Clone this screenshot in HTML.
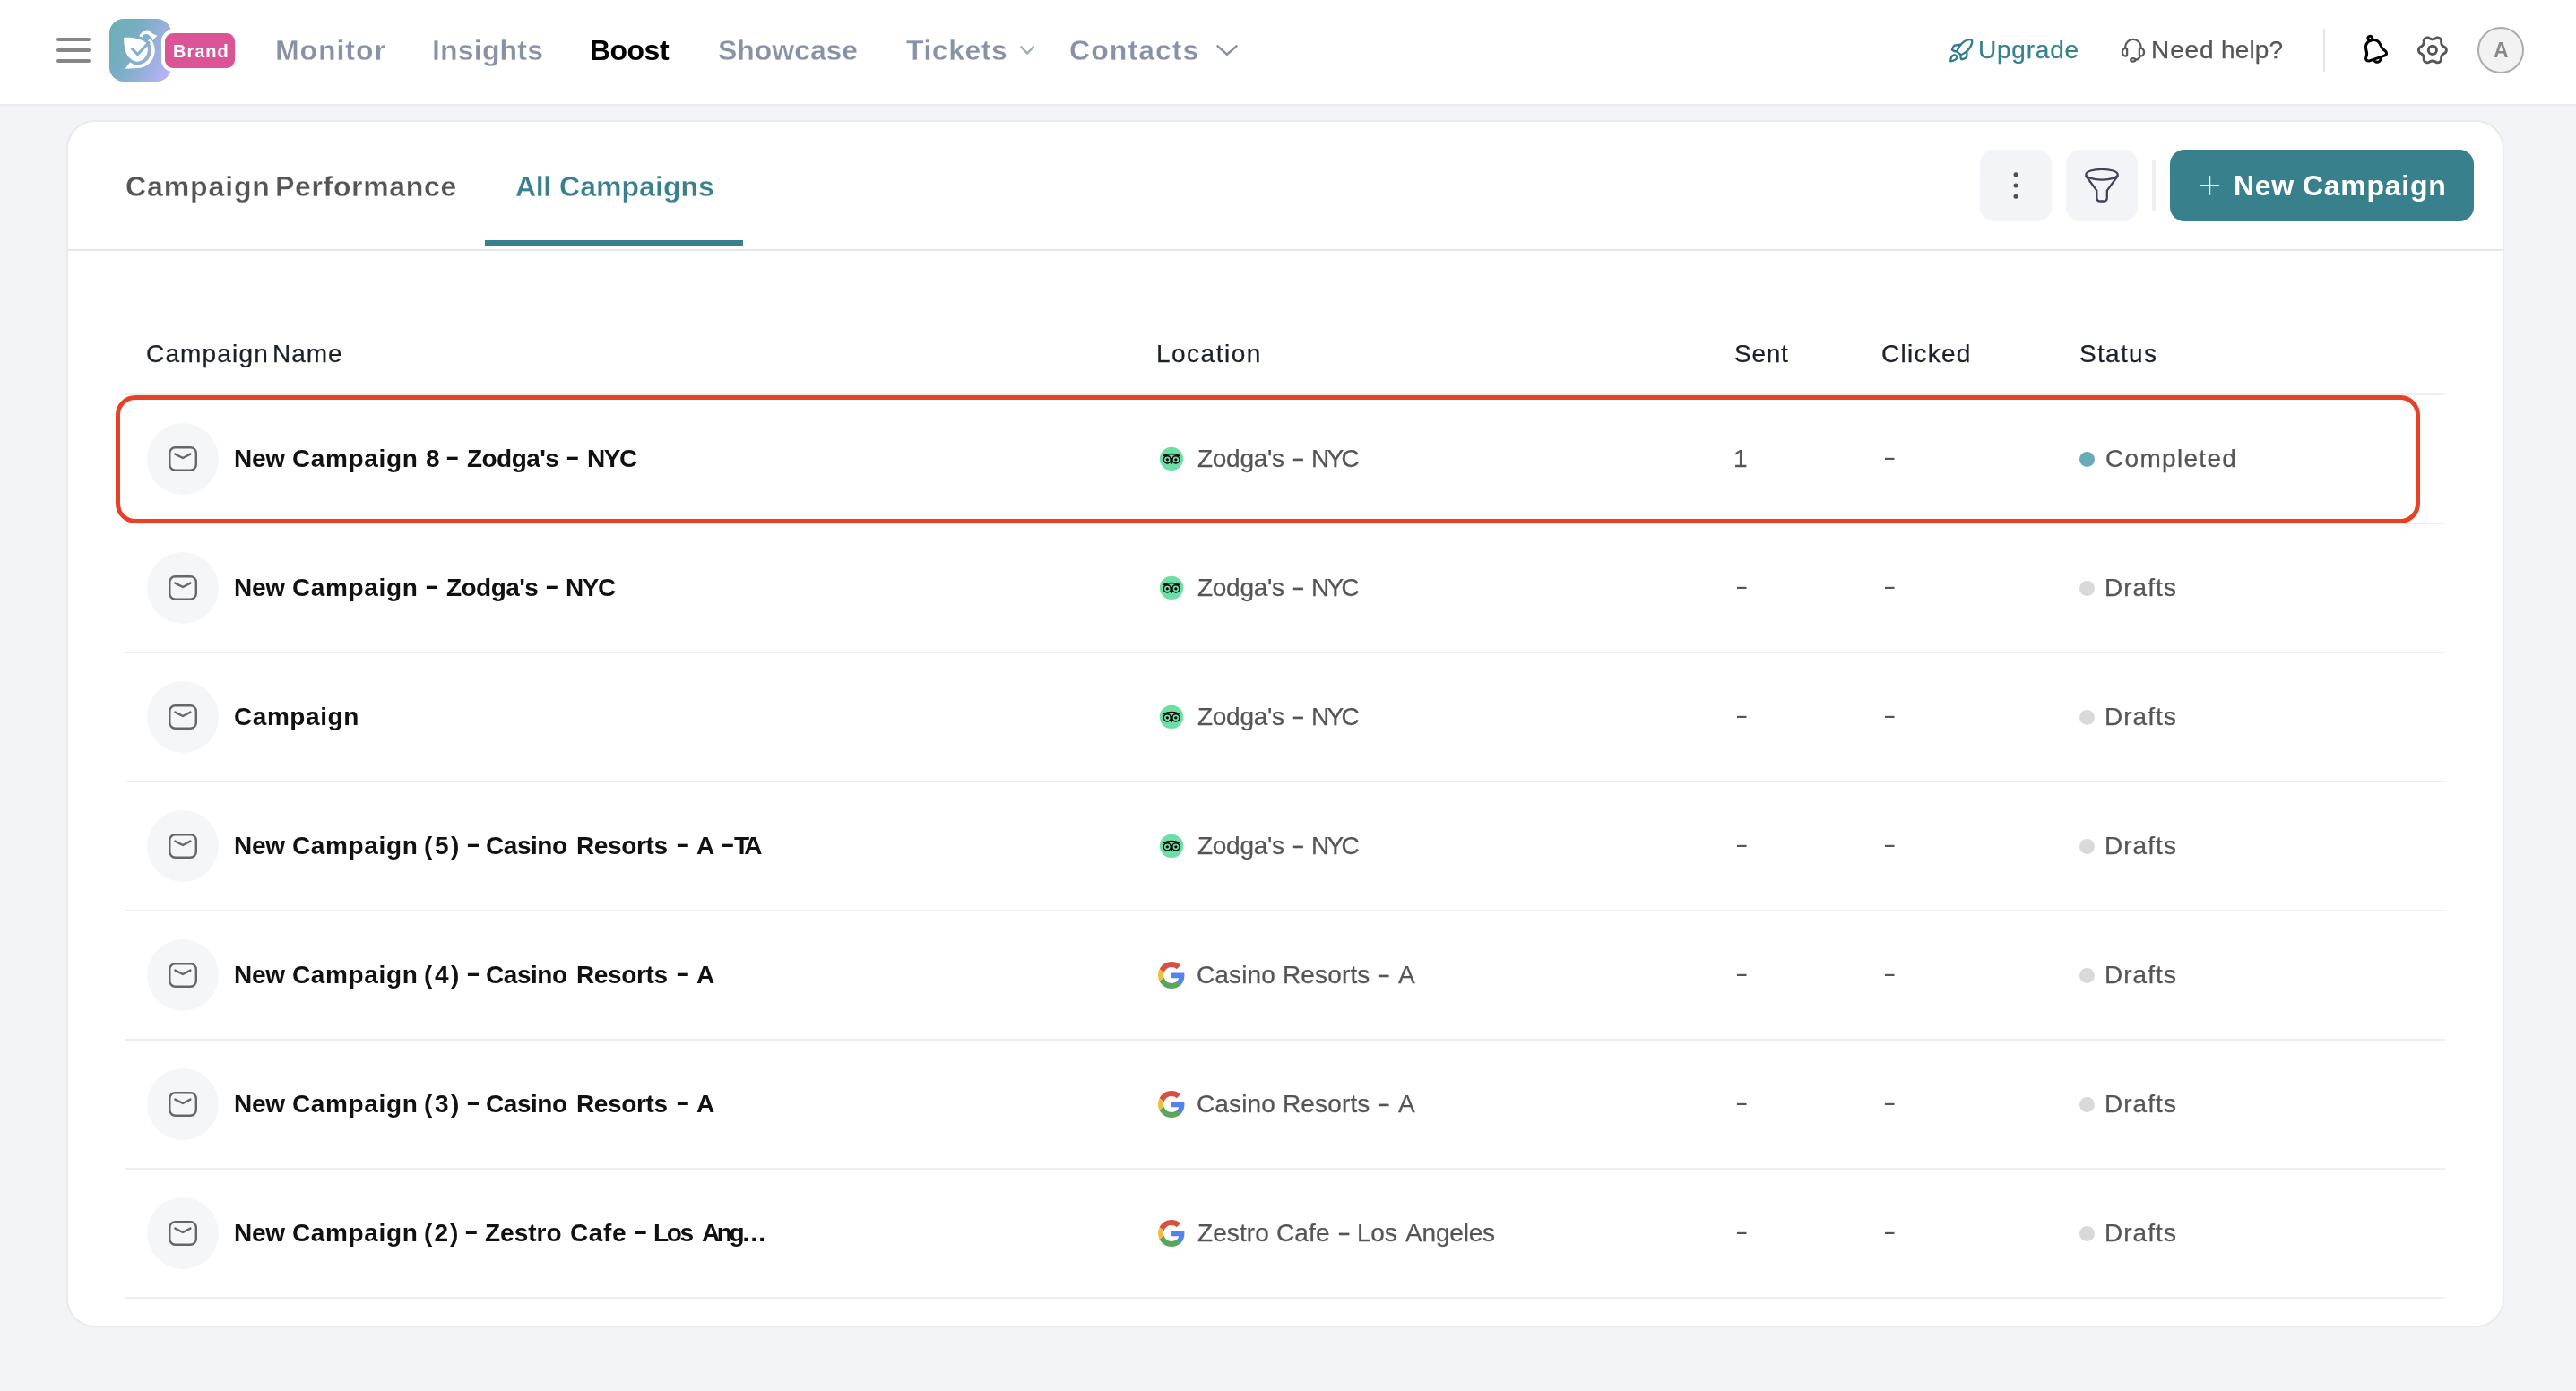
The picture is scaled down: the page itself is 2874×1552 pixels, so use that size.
<!DOCTYPE html>
<html lang="en">
<head>
<meta charset="utf-8">
<title>All Campaigns</title>
<style>
html,body{margin:0;padding:0}
body{width:2874px;height:1552px;overflow:hidden;background:#F3F4F8;position:relative;font-family:"Liberation Sans",sans-serif}
.abs{position:absolute}
.t{will-change:transform;position:absolute;white-space:pre;line-height:1;font-family:"Liberation Sans",sans-serif}
#hdr{left:0;top:0;width:2874px;height:116px;background:#fff;border-bottom:2px solid #EBEBEB}
.bar{left:63px;width:38px;height:4px;border-radius:2px;background:#868686}
#logo{left:122px;top:21px;width:69px;height:70px;border-radius:16px;background:linear-gradient(115deg,#6CAFB5 0%,#76ADC0 32%,#84AFCD 50%,#9BB0DF 68%,#B9B2F7 92%)}
#badge{left:184px;top:36.5px;width:78px;height:39px;border-radius:9px;background:#DB5596;box-shadow:0 0 0 4px #fff}
#vdiv{left:2592px;top:32px;width:2px;height:48px;background:#E3E5EE}
#avatar{left:2764px;top:30px;width:52px;height:52px;border-radius:50%;box-sizing:border-box;border:2px solid #ACACAC;background:#F2F2F2}
#card{left:74px;top:134px;width:2720px;height:1347px;box-sizing:border-box;border:2px solid #EAEAEA;border-radius:32px;background:#fff}
#tabline{left:76px;top:278px;width:2716px;height:2px;background:#E6E6E6}
#tabul{left:541px;top:268px;width:288px;height:6px;background:#37808C}
.sqbtn{top:167px;width:80px;height:80px;border-radius:16px;background:#F3F4F7}
#bdiv{left:2401px;top:179px;width:4px;height:56px;background:#EEEEEE}
#newbtn{left:2421px;top:167px;width:339px;height:80px;border-radius:16px;background:#37808C}
.hr{left:140px;width:2588px;height:2px;background:#EFEFEF}
.circ{left:164px;width:80px;height:80px;border-radius:50%;background:#F5F6F8}
.dot{left:2319.5px;width:17px;height:17px;border-radius:50%;background:#D9D9D9}
#redbox{left:129px;top:441px;width:2571px;height:143px;box-sizing:border-box;border:5px solid #E84025;border-radius:22px}
.dash{position:absolute;white-space:pre;line-height:1;font-size:28px;color:#555;transform:scaleX(1.55);transform-origin:0 50%;will-change:transform}
.hy{transform-origin:0 50%}
.r{-webkit-text-stroke:0.25px currentColor}
.sb{-webkit-text-stroke:0.3px #fff}
svg{position:absolute;overflow:visible}
</style>
</head>
<body>
<div id="hdr" class="abs"></div>
<div class="abs bar" style="top:42px"></div>
<div class="abs bar" style="top:54px"></div>
<div class="abs bar" style="top:66px"></div>
<div id="logo" class="abs"></div>
<svg style="left:118px;top:18px" width="80" height="76" viewBox="0 0 1464 1391">
<path fill="#fff" d="M370,440 C500,425 700,455 815,535 C875,620 880,760 790,860 C730,920 660,935 610,925 C500,890 420,800 395,680 C375,590 365,500 370,440 Z"/>
<path fill="none" stroke="#fff" stroke-width="70" d="M883,481 A327,327 0 0 1 476.5,983.2"/>
<path fill="#fff" d="M395,1075 L500,940 L660,1060 Z"/>
<path fill="none" stroke="#fff" stroke-width="60" d="M712,418 A125,125 0 0 1 940,400"/>
<path fill="#fff" d="M685,400 L740,350 L745,430 Z"/>
<path fill="#fff" d="M915,345 L1050,400 L955,500 Z"/>
<path fill="none" stroke="#82AECB" stroke-width="56" d="M525,655 L650,780 L895,525"/>
</svg>
<div id="badge" class="abs"></div>
<svg style="left:0;top:0" width="2874" height="120"><path d="M1139.3,52.3 L1146.1,59.6 L1152.9,52.3" fill="none" stroke="#A3ABBB" stroke-width="2.4" stroke-linecap="round" stroke-linejoin="round"/></svg>
<svg style="left:0;top:0" width="2874" height="120"><path d="M1358.5,51.4 L1369.0,60.8 L1379.5,51.4" fill="none" stroke="#8892A6" stroke-width="2.6" stroke-linecap="round" stroke-linejoin="round"/></svg>
<svg style="left:2165px;top:35px" width="50" height="45" viewBox="0 0 1546 1391">
<g fill="none" stroke="#2F7D8A" stroke-width="72" stroke-linecap="round" stroke-linejoin="round">
<path d="M560,690 C620,560 720,420 800,360 C880,300 980,270 1050,285 C1090,300 1095,340 1085,400 C1060,500 1010,590 900,690 C840,740 770,780 700,810 Z"/>
<path d="M690,455 C610,470 540,470 480,480 C440,520 410,580 400,630 C420,670 470,680 540,690"/>
<path d="M900,700 C915,760 915,820 905,870 C880,920 800,960 720,965 C690,930 690,880 695,820"/>
<path d="M350,1010 C350,930 390,840 460,815 C520,810 565,850 570,900 C540,980 440,1020 350,1030 Z"/>
</g></svg>
<svg style="left:2355px;top:35px" width="50" height="45" viewBox="0 0 1546 1391">
<g fill="none" stroke="#5A5A5A" stroke-width="70" stroke-linecap="round" stroke-linejoin="round">
<path d="M500,545 A270,270 0 0 1 1040,545"/>
<path d="M560,615 Q560,580 528,580 L505,580 Q400,592 400,715 Q400,838 505,850 L528,850 Q560,850 560,815 Z"/>
<path d="M985,615 Q985,580 1017,580 L1040,580 Q1145,592 1145,715 Q1145,838 1040,850 L1017,850 Q985,850 985,815 Z"/>
<path d="M1005,860 C990,940 930,975 850,980"/>
<ellipse cx="765" cy="985" rx="82" ry="55"/>
</g></svg>
<svg style="left:2625px;top:30px" width="50" height="50" viewBox="-25 -25 50 50">
<g transform="translate(-1.3,0.4) rotate(-19) scale(1.06)" fill="none" stroke="#000" stroke-width="2.8" stroke-linecap="round" stroke-linejoin="round">
<path d="M-8.3,9.6 C-11.2,9.6 -12.2,6.4 -10.4,4.6 C-8.6,2.8 -8,0.2 -8,-2.4 C-8,-7.2 -4.6,-10.4 0,-10.4 C4.6,-10.4 8,-7.2 8,-2.4 C8,0.2 8.6,2.8 10.4,4.6 C12.2,6.4 11.2,9.6 8.3,9.6 Z"/>
<circle cx="0" cy="-12.6" r="2.3"/>
<path d="M-3.6,9.8 C-3.6,12 -2,13.6 0,13.6 C2,13.6 3.6,12 3.6,9.8"/>
</g></svg>
<svg style="left:2688px;top:30px" width="52" height="52" viewBox="-25.9 -25.9 52 52">
<g fill="none" stroke="#555" stroke-width="2.9" stroke-linejoin="round"><path d="M15.45,0.00 L15.42,0.54 L15.31,1.07 L15.15,1.59 L14.91,2.10 L14.60,2.57 L14.20,3.02 L13.66,3.41 L12.91,3.70 L12.46,4.05 L12.03,4.38 L11.62,4.69 L11.24,5.01 L10.91,5.32 L10.63,5.65 L10.39,6.00 L10.21,6.38 L10.06,6.79 L9.96,7.23 L9.87,7.71 L9.81,8.23 L9.74,8.77 L9.66,9.33 L9.78,10.13 L9.71,10.79 L9.53,11.35 L9.27,11.86 L8.95,12.32 L8.58,12.73 L8.17,13.08 L7.73,13.38 L7.24,13.62 L6.73,13.80 L6.19,13.91 L5.64,13.96 L5.07,13.93 L4.49,13.80 L3.88,13.53 L3.25,13.03 L2.72,12.82 L2.22,12.61 L1.74,12.41 L1.29,12.24 L0.85,12.11 L0.42,12.03 L0.00,12.00 L-0.42,12.03 L-0.85,12.11 L-1.29,12.24 L-1.74,12.41 L-2.22,12.61 L-2.72,12.82 L-3.25,13.03 L-3.88,13.53 L-4.49,13.80 L-5.07,13.93 L-5.64,13.96 L-6.19,13.91 L-6.73,13.80 L-7.24,13.62 L-7.72,13.38 L-8.17,13.08 L-8.58,12.73 L-8.95,12.32 L-9.27,11.86 L-9.53,11.35 L-9.71,10.79 L-9.78,10.13 L-9.66,9.33 L-9.74,8.77 L-9.81,8.23 L-9.87,7.71 L-9.96,7.23 L-10.06,6.79 L-10.21,6.38 L-10.39,6.00 L-10.63,5.65 L-10.91,5.32 L-11.24,5.01 L-11.62,4.69 L-12.03,4.38 L-12.46,4.05 L-12.91,3.70 L-13.66,3.41 L-14.20,3.02 L-14.60,2.57 L-14.91,2.10 L-15.15,1.59 L-15.31,1.07 L-15.42,0.54 L-15.45,0.00 L-15.42,-0.54 L-15.31,-1.07 L-15.15,-1.59 L-14.91,-2.10 L-14.60,-2.57 L-14.20,-3.02 L-13.66,-3.41 L-12.91,-3.70 L-12.46,-4.05 L-12.03,-4.38 L-11.62,-4.69 L-11.24,-5.01 L-10.91,-5.32 L-10.63,-5.65 L-10.39,-6.00 L-10.21,-6.38 L-10.06,-6.79 L-9.96,-7.23 L-9.87,-7.71 L-9.81,-8.23 L-9.74,-8.77 L-9.66,-9.33 L-9.78,-10.13 L-9.71,-10.79 L-9.53,-11.35 L-9.27,-11.86 L-8.95,-12.32 L-8.58,-12.73 L-8.17,-13.08 L-7.73,-13.38 L-7.24,-13.62 L-6.73,-13.80 L-6.19,-13.91 L-5.64,-13.96 L-5.07,-13.93 L-4.49,-13.80 L-3.88,-13.53 L-3.25,-13.03 L-2.72,-12.82 L-2.22,-12.61 L-1.74,-12.41 L-1.29,-12.24 L-0.85,-12.11 L-0.42,-12.03 L-0.00,-12.00 L0.42,-12.03 L0.85,-12.11 L1.29,-12.24 L1.74,-12.41 L2.22,-12.61 L2.72,-12.82 L3.25,-13.03 L3.88,-13.53 L4.49,-13.80 L5.07,-13.93 L5.64,-13.96 L6.19,-13.91 L6.73,-13.80 L7.24,-13.62 L7.73,-13.38 L8.17,-13.08 L8.58,-12.73 L8.95,-12.32 L9.27,-11.86 L9.53,-11.35 L9.71,-10.79 L9.78,-10.13 L9.66,-9.33 L9.74,-8.77 L9.81,-8.23 L9.87,-7.71 L9.96,-7.23 L10.06,-6.79 L10.21,-6.38 L10.39,-6.00 L10.63,-5.65 L10.91,-5.32 L11.24,-5.01 L11.62,-4.69 L12.03,-4.38 L12.46,-4.05 L12.91,-3.70 L13.66,-3.41 L14.20,-3.02 L14.60,-2.57 L14.91,-2.10 L15.15,-1.59 L15.31,-1.07 L15.42,-0.54 Z"/><circle cx="0" cy="0" r="4.6"/></g></svg>
<div id="vdiv" class="abs"></div>
<div id="avatar" class="abs"></div>
<div id="card" class="abs"></div>
<div id="tabline" class="abs"></div>
<div id="tabul" class="abs"></div>
<div class="abs sqbtn" style="left:2209px"></div>
<div class="abs sqbtn" style="left:2305px"></div>
<div id="bdiv" class="abs"></div>
<div id="newbtn" class="abs"></div>
<svg style="left:0;top:0" width="2874" height="300"><g fill="#4A5060"><circle cx="2249" cy="194.8" r="2.5"/><circle cx="2249" cy="207" r="2.5"/><circle cx="2249" cy="219.2" r="2.5"/></g><g fill="none" stroke="#3E4556" stroke-width="2.3" stroke-linejoin="round" stroke-linecap="round"><ellipse cx="2345" cy="194.7" rx="17.7" ry="5.9"/><path d="M2327.4,196.5 L2339.3,212.6 L2339.3,220.4 Q2339.3,224.5 2343.4,224.5 L2346.7,224.5 Q2350.8,224.5 2350.8,220.4 L2350.8,212.6 L2362.6,196.5"/></g><g stroke="#fff" stroke-width="2.2" stroke-linecap="butt"><path d="M2454.4,207 H2475.8 M2465.1,196.3 V217.7"/></g></svg>
<div class="abs hr" style="top:439px"></div>
<div class="abs hr" style="top:583px"></div>
<div class="abs circ" style="top:472px"></div>
<svg style="left:0;top:472px" width="300" height="80"><g fill="none" stroke="#666" stroke-width="2.4" stroke-linecap="round" stroke-linejoin="round"><rect x="189.3" y="27.3" width="29.5" height="25.4" rx="6.2"/><path d="M195.4,34.6 L204,39 L212.4,34.6"/></g></svg>
<svg style="left:1280px;top:490.2px" width="60" height="45" viewBox="0 0 1855 1391"><circle cx="835" cy="675" r="407" fill="#6CDEA6"/><g fill="none" stroke="#000" stroke-width="46"><circle cx="690" cy="705" r="127"/><circle cx="985" cy="705" r="127"/><path d="M560,575 Q835,440 1115,575"/></g><g fill="#000"><circle cx="690" cy="705" r="50"/><circle cx="985" cy="705" r="50"/><path d="M530,545 L660,535 L600,610 Z"/><path d="M1140,545 L1010,535 L1070,610 Z"/><path d="M790,650 L880,650 L860,850 L835,872 L810,850 Z"/></g></svg>
<div class="abs dot" style="top:503.5px;background:#6AABB8"></div>
<span class="dash" style="left:2101.2px;top:496.2px">-</span>
<div class="abs hr" style="top:727px"></div>
<div class="abs circ" style="top:616px"></div>
<svg style="left:0;top:616px" width="300" height="80"><g fill="none" stroke="#666" stroke-width="2.4" stroke-linecap="round" stroke-linejoin="round"><rect x="189.3" y="27.3" width="29.5" height="25.4" rx="6.2"/><path d="M195.4,34.6 L204,39 L212.4,34.6"/></g></svg>
<svg style="left:1280px;top:634.2px" width="60" height="45" viewBox="0 0 1855 1391"><circle cx="835" cy="675" r="407" fill="#6CDEA6"/><g fill="none" stroke="#000" stroke-width="46"><circle cx="690" cy="705" r="127"/><circle cx="985" cy="705" r="127"/><path d="M560,575 Q835,440 1115,575"/></g><g fill="#000"><circle cx="690" cy="705" r="50"/><circle cx="985" cy="705" r="50"/><path d="M530,545 L660,535 L600,610 Z"/><path d="M1140,545 L1010,535 L1070,610 Z"/><path d="M790,650 L880,650 L860,850 L835,872 L810,850 Z"/></g></svg>
<div class="abs dot" style="top:647.5px;background:#D9D9D9"></div>
<span class="dash" style="left:1936.2px;top:640.2px">-</span>
<span class="dash" style="left:2101.2px;top:640.2px">-</span>
<div class="abs hr" style="top:871px"></div>
<div class="abs circ" style="top:760px"></div>
<svg style="left:0;top:760px" width="300" height="80"><g fill="none" stroke="#666" stroke-width="2.4" stroke-linecap="round" stroke-linejoin="round"><rect x="189.3" y="27.3" width="29.5" height="25.4" rx="6.2"/><path d="M195.4,34.6 L204,39 L212.4,34.6"/></g></svg>
<svg style="left:1280px;top:778.2px" width="60" height="45" viewBox="0 0 1855 1391"><circle cx="835" cy="675" r="407" fill="#6CDEA6"/><g fill="none" stroke="#000" stroke-width="46"><circle cx="690" cy="705" r="127"/><circle cx="985" cy="705" r="127"/><path d="M560,575 Q835,440 1115,575"/></g><g fill="#000"><circle cx="690" cy="705" r="50"/><circle cx="985" cy="705" r="50"/><path d="M530,545 L660,535 L600,610 Z"/><path d="M1140,545 L1010,535 L1070,610 Z"/><path d="M790,650 L880,650 L860,850 L835,872 L810,850 Z"/></g></svg>
<div class="abs dot" style="top:791.5px;background:#D9D9D9"></div>
<span class="dash" style="left:1936.2px;top:784.2px">-</span>
<span class="dash" style="left:2101.2px;top:784.2px">-</span>
<div class="abs hr" style="top:1015px"></div>
<div class="abs circ" style="top:904px"></div>
<svg style="left:0;top:904px" width="300" height="80"><g fill="none" stroke="#666" stroke-width="2.4" stroke-linecap="round" stroke-linejoin="round"><rect x="189.3" y="27.3" width="29.5" height="25.4" rx="6.2"/><path d="M195.4,34.6 L204,39 L212.4,34.6"/></g></svg>
<svg style="left:1280px;top:922.2px" width="60" height="45" viewBox="0 0 1855 1391"><circle cx="835" cy="675" r="407" fill="#6CDEA6"/><g fill="none" stroke="#000" stroke-width="46"><circle cx="690" cy="705" r="127"/><circle cx="985" cy="705" r="127"/><path d="M560,575 Q835,440 1115,575"/></g><g fill="#000"><circle cx="690" cy="705" r="50"/><circle cx="985" cy="705" r="50"/><path d="M530,545 L660,535 L600,610 Z"/><path d="M1140,545 L1010,535 L1070,610 Z"/><path d="M790,650 L880,650 L860,850 L835,872 L810,850 Z"/></g></svg>
<div class="abs dot" style="top:935.5px;background:#D9D9D9"></div>
<span class="dash" style="left:1936.2px;top:928.2px">-</span>
<span class="dash" style="left:2101.2px;top:928.2px">-</span>
<div class="abs hr" style="top:1159px"></div>
<div class="abs circ" style="top:1048px"></div>
<svg style="left:0;top:1048px" width="300" height="80"><g fill="none" stroke="#666" stroke-width="2.4" stroke-linecap="round" stroke-linejoin="round"><rect x="189.3" y="27.3" width="29.5" height="25.4" rx="6.2"/><path d="M195.4,34.6 L204,39 L212.4,34.6"/></g></svg>
<svg style="left:1292.1px;top:1073.0px" width="29.6" height="30" viewBox="0 0 47.2 48" preserveAspectRatio="none"><path fill="#D8503F" d="M24 9.5c3.54 0 6.71 1.22 9.21 3.6l6.85-6.85C35.9 2.38 30.47 0 24 0 14.62 0 6.51 5.38 2.56 13.22l7.98 6.19C12.43 13.72 17.74 9.5 24 9.5z"/><path fill="#5383EC" d="M46.98 24.55c0-1.57-.15-3.09-.38-4.55H24v9.02h12.94c-.58 2.96-2.26 5.48-4.78 7.18l7.73 6c4.51-4.18 7.09-10.36 7.09-17.65z"/><path fill="#F1BE42" d="M10.53 28.59c-.48-1.45-.76-2.99-.76-4.59s.27-3.14.76-4.59l-7.98-6.19C.92 16.46 0 20.12 0 24c0 3.88.92 7.54 2.56 10.78l7.97-6.19z"/><path fill="#58A55C" d="M24 48c6.480 0 11.93-2.13 15.89-5.81l-7.73-6c-2.15 1.45-4.92 2.3-8.16 2.3-6.26 0-11.57-4.22-13.47-9.91l-7.98 6.19C6.51 42.62 14.62 48 24 48z"/></svg>
<div class="abs dot" style="top:1079.5px;background:#D9D9D9"></div>
<span class="dash" style="left:1936.2px;top:1072.2px">-</span>
<span class="dash" style="left:2101.2px;top:1072.2px">-</span>
<div class="abs hr" style="top:1303px"></div>
<div class="abs circ" style="top:1192px"></div>
<svg style="left:0;top:1192px" width="300" height="80"><g fill="none" stroke="#666" stroke-width="2.4" stroke-linecap="round" stroke-linejoin="round"><rect x="189.3" y="27.3" width="29.5" height="25.4" rx="6.2"/><path d="M195.4,34.6 L204,39 L212.4,34.6"/></g></svg>
<svg style="left:1292.1px;top:1217.0px" width="29.6" height="30" viewBox="0 0 47.2 48" preserveAspectRatio="none"><path fill="#D8503F" d="M24 9.5c3.54 0 6.71 1.22 9.21 3.6l6.85-6.85C35.9 2.38 30.47 0 24 0 14.62 0 6.51 5.38 2.56 13.22l7.98 6.19C12.43 13.72 17.74 9.5 24 9.5z"/><path fill="#5383EC" d="M46.98 24.55c0-1.57-.15-3.09-.38-4.55H24v9.02h12.94c-.58 2.96-2.26 5.48-4.78 7.18l7.73 6c4.51-4.18 7.09-10.36 7.09-17.65z"/><path fill="#F1BE42" d="M10.53 28.59c-.48-1.45-.76-2.99-.76-4.59s.27-3.14.76-4.59l-7.98-6.19C.92 16.46 0 20.12 0 24c0 3.88.92 7.54 2.56 10.78l7.97-6.19z"/><path fill="#58A55C" d="M24 48c6.480 0 11.93-2.13 15.89-5.81l-7.73-6c-2.15 1.45-4.92 2.3-8.16 2.3-6.26 0-11.57-4.22-13.47-9.91l-7.98 6.19C6.51 42.62 14.62 48 24 48z"/></svg>
<div class="abs dot" style="top:1223.5px;background:#D9D9D9"></div>
<span class="dash" style="left:1936.2px;top:1216.2px">-</span>
<span class="dash" style="left:2101.2px;top:1216.2px">-</span>
<div class="abs hr" style="top:1447px"></div>
<div class="abs circ" style="top:1336px"></div>
<svg style="left:0;top:1336px" width="300" height="80"><g fill="none" stroke="#666" stroke-width="2.4" stroke-linecap="round" stroke-linejoin="round"><rect x="189.3" y="27.3" width="29.5" height="25.4" rx="6.2"/><path d="M195.4,34.6 L204,39 L212.4,34.6"/></g></svg>
<svg style="left:1292.1px;top:1361.0px" width="29.6" height="30" viewBox="0 0 47.2 48" preserveAspectRatio="none"><path fill="#D8503F" d="M24 9.5c3.54 0 6.71 1.22 9.21 3.6l6.85-6.85C35.9 2.38 30.47 0 24 0 14.62 0 6.51 5.38 2.56 13.22l7.98 6.19C12.43 13.72 17.74 9.5 24 9.5z"/><path fill="#5383EC" d="M46.98 24.55c0-1.57-.15-3.09-.38-4.55H24v9.02h12.94c-.58 2.96-2.26 5.48-4.78 7.18l7.73 6c4.51-4.18 7.09-10.36 7.09-17.65z"/><path fill="#F1BE42" d="M10.53 28.59c-.48-1.45-.76-2.99-.76-4.59s.27-3.14.76-4.59l-7.98-6.19C.92 16.46 0 20.12 0 24c0 3.88.92 7.54 2.56 10.78l7.97-6.19z"/><path fill="#58A55C" d="M24 48c6.480 0 11.93-2.13 15.89-5.81l-7.73-6c-2.15 1.45-4.92 2.3-8.16 2.3-6.26 0-11.57-4.22-13.47-9.91l-7.98 6.19C6.51 42.62 14.62 48 24 48z"/></svg>
<div class="abs dot" style="top:1367.5px;background:#D9D9D9"></div>
<span class="dash" style="left:1936.2px;top:1360.2px">-</span>
<span class="dash" style="left:2101.2px;top:1360.2px">-</span>
<div id="redbox" class="abs"></div>
<span class="t sb" style="left:307.0px;top:40.0px;font-size:32px;font-weight:bold;color:#8892A6;letter-spacing:0.93px">Monitor</span>
<span class="t sb" style="left:481.5px;top:40.0px;font-size:32px;font-weight:bold;color:#8892A6;letter-spacing:0.19px">Insights</span>
<span class="t" style="left:657.6px;top:40.0px;font-size:32px;font-weight:bold;color:#000;letter-spacing:-0.53px">Boost</span>
<span class="t sb" style="left:800.9px;top:40.0px;font-size:32px;font-weight:bold;color:#8892A6;letter-spacing:-0.05px">Showcase</span>
<span class="t sb" style="left:1010.7px;top:40.0px;font-size:32px;font-weight:bold;color:#8892A6;letter-spacing:0.50px">Tickets</span>
<span class="t sb" style="left:1192.5px;top:40.0px;font-size:32px;font-weight:bold;color:#8892A6;letter-spacing:1.07px">Contacts</span>
<span class="t r" style="left:2207.4px;top:41.9px;font-size:28px;font-weight:normal;color:#37808C;letter-spacing:0.79px">Upgrade</span>
<span class="t r" style="left:2399.9px;top:41.9px;font-size:28px;font-weight:normal;color:#555555;letter-spacing:0.91px">Need</span>
<span class="t r" style="left:2477.8px;top:41.9px;font-size:28px;font-weight:normal;color:#555555;letter-spacing:0.12px">help?</span>
<span class="t" style="left:192.5px;top:46.9px;font-size:20px;font-weight:bold;color:#fff;letter-spacing:0.96px">Brand</span>
<span class="t sb" style="left:139.8px;top:192.3px;font-size:32px;font-weight:bold;color:#555555;letter-spacing:0.89px">Campaign</span>
<span class="t sb" style="left:307.1px;top:192.3px;font-size:32px;font-weight:bold;color:#555555;letter-spacing:0.66px">Performance</span>
<span class="t sb" style="left:574.7px;top:192.3px;font-size:32px;font-weight:bold;color:#37808C;letter-spacing:-0.40px">All</span>
<span class="t sb" style="left:624.0px;top:192.3px;font-size:32px;font-weight:bold;color:#37808C;letter-spacing:0.05px">Campaigns</span>
<span class="t" style="left:2492.0px;top:191.1px;font-size:32px;font-weight:bold;color:#fff;letter-spacing:0.65px">New</span>
<span class="t" style="left:2568.7px;top:191.1px;font-size:32px;font-weight:bold;color:#fff;letter-spacing:0.72px">Campaign</span>
<span class="t r" style="left:163.3px;top:380.6px;font-size:28px;font-weight:normal;color:#1B202B;letter-spacing:1.16px">Campaign</span>
<span class="t r" style="left:304.2px;top:380.6px;font-size:28px;font-weight:normal;color:#1B202B;letter-spacing:0.96px">Name</span>
<span class="t r" style="left:1289.7px;top:380.6px;font-size:28px;font-weight:normal;color:#1B202B;letter-spacing:1.49px">Location</span>
<span class="t r" style="left:1935.0px;top:380.6px;font-size:28px;font-weight:normal;color:#1B202B;letter-spacing:0.73px">Sent</span>
<span class="t r" style="left:2099.2px;top:380.6px;font-size:28px;font-weight:normal;color:#1B202B;letter-spacing:1.26px">Clicked</span>
<span class="t r" style="left:2320.0px;top:380.6px;font-size:28px;font-weight:normal;color:#1B202B;letter-spacing:1.30px">Status</span>
<span class="t" style="left:260.8px;top:498.0px;font-size:28px;font-weight:bold;color:#111111;letter-spacing:-0.30px">New</span>
<span class="t" style="left:326.3px;top:498.0px;font-size:28px;font-weight:bold;color:#111111;letter-spacing:0.64px">Campaign</span>
<span class="t" style="left:474.5px;top:498.0px;font-size:28px;font-weight:bold;color:#111111;letter-spacing:0.00px">8</span>
<span class="t hy" style="left:497.1px;top:496.0px;font-size:28px;font-weight:bold;color:#111111;transform:scale(1.67,1.0)">-</span>
<span class="t" style="left:521.1px;top:498.0px;font-size:28px;font-weight:bold;color:#111111;letter-spacing:-0.56px">Zodga's</span>
<span class="t hy" style="left:631.2px;top:496.0px;font-size:28px;font-weight:bold;color:#111111;transform:scale(1.68,1.0)">-</span>
<span class="t" style="left:654.6px;top:498.0px;font-size:28px;font-weight:bold;color:#111111;letter-spacing:-1.45px">NYC</span>
<span class="t r" style="left:1335.9px;top:498.0px;font-size:28px;font-weight:normal;color:#555555;letter-spacing:-0.29px">Zodga's</span>
<span class="t r hy" style="left:1440.9px;top:497.0px;font-size:28px;font-weight:normal;color:#555555;transform:scale(1.59,1.0)">-</span>
<span class="t r" style="left:1462.7px;top:498.0px;font-size:28px;font-weight:normal;color:#555555;letter-spacing:-2.70px">NYC</span>
<span class="t r" style="left:1934.0px;top:498.0px;font-size:28px;font-weight:normal;color:#555555;letter-spacing:0.00px">1</span>
<span class="t r" style="left:2348.7px;top:498.0px;font-size:28px;font-weight:normal;color:#555555;letter-spacing:1.31px">Completed</span>
<span class="t" style="left:260.8px;top:642.0px;font-size:28px;font-weight:bold;color:#111111;letter-spacing:-0.30px">New</span>
<span class="t" style="left:326.3px;top:642.0px;font-size:28px;font-weight:bold;color:#111111;letter-spacing:0.64px">Campaign</span>
<span class="t hy" style="left:473.6px;top:640.0px;font-size:28px;font-weight:bold;color:#111111;transform:scale(1.67,1.0)">-</span>
<span class="t" style="left:497.6px;top:642.0px;font-size:28px;font-weight:bold;color:#111111;letter-spacing:-0.56px">Zodga's</span>
<span class="t hy" style="left:607.7px;top:640.0px;font-size:28px;font-weight:bold;color:#111111;transform:scale(1.68,1.0)">-</span>
<span class="t" style="left:631.1px;top:642.0px;font-size:28px;font-weight:bold;color:#111111;letter-spacing:-1.45px">NYC</span>
<span class="t r" style="left:1335.9px;top:642.0px;font-size:28px;font-weight:normal;color:#555555;letter-spacing:-0.29px">Zodga's</span>
<span class="t r hy" style="left:1440.9px;top:641.0px;font-size:28px;font-weight:normal;color:#555555;transform:scale(1.59,1.0)">-</span>
<span class="t r" style="left:1462.7px;top:642.0px;font-size:28px;font-weight:normal;color:#555555;letter-spacing:-2.70px">NYC</span>
<span class="t r" style="left:2347.7px;top:642.0px;font-size:28px;font-weight:normal;color:#555555;letter-spacing:1.04px">Drafts</span>
<span class="t" style="left:260.8px;top:786.0px;font-size:28px;font-weight:bold;color:#111111;letter-spacing:0.56px">Campaign</span>
<span class="t r" style="left:1335.9px;top:786.0px;font-size:28px;font-weight:normal;color:#555555;letter-spacing:-0.29px">Zodga's</span>
<span class="t r hy" style="left:1440.9px;top:785.0px;font-size:28px;font-weight:normal;color:#555555;transform:scale(1.59,1.0)">-</span>
<span class="t r" style="left:1462.7px;top:786.0px;font-size:28px;font-weight:normal;color:#555555;letter-spacing:-2.70px">NYC</span>
<span class="t r" style="left:2347.7px;top:786.0px;font-size:28px;font-weight:normal;color:#555555;letter-spacing:1.04px">Drafts</span>
<span class="t" style="left:260.8px;top:930.0px;font-size:28px;font-weight:bold;color:#111111;letter-spacing:-0.30px">New</span>
<span class="t" style="left:326.3px;top:930.0px;font-size:28px;font-weight:bold;color:#111111;letter-spacing:0.64px">Campaign</span>
<span class="t" style="left:472.5px;top:930.0px;font-size:28px;font-weight:bold;color:#111111;letter-spacing:2.60px">(5)</span>
<span class="t hy" style="left:519.6px;top:928.0px;font-size:28px;font-weight:bold;color:#111111;transform:scale(1.71,1.0)">-</span>
<span class="t" style="left:542.3px;top:930.0px;font-size:28px;font-weight:bold;color:#111111;letter-spacing:-0.45px">Casino</span>
<span class="t" style="left:643.2px;top:930.0px;font-size:28px;font-weight:bold;color:#111111;letter-spacing:-0.35px">Resorts</span>
<span class="t hy" style="left:753.6px;top:928.0px;font-size:28px;font-weight:bold;color:#111111;transform:scale(1.68,1.0)">-</span>
<span class="t" style="left:776.8px;top:930.0px;font-size:28px;font-weight:bold;color:#111111;letter-spacing:0.00px">A</span>
<span class="t hy" style="left:804.1px;top:928.0px;font-size:28px;font-weight:bold;color:#111111;transform:scale(1.68,1.0)">-</span>
<span class="t" style="left:819.4px;top:930.0px;font-size:28px;font-weight:bold;color:#111111;letter-spacing:-3.73px">TA</span>
<span class="t r" style="left:1335.9px;top:930.0px;font-size:28px;font-weight:normal;color:#555555;letter-spacing:-0.29px">Zodga's</span>
<span class="t r hy" style="left:1440.9px;top:929.0px;font-size:28px;font-weight:normal;color:#555555;transform:scale(1.59,1.0)">-</span>
<span class="t r" style="left:1462.7px;top:930.0px;font-size:28px;font-weight:normal;color:#555555;letter-spacing:-2.70px">NYC</span>
<span class="t r" style="left:2347.7px;top:930.0px;font-size:28px;font-weight:normal;color:#555555;letter-spacing:1.04px">Drafts</span>
<span class="t" style="left:260.8px;top:1074.0px;font-size:28px;font-weight:bold;color:#111111;letter-spacing:-0.30px">New</span>
<span class="t" style="left:326.3px;top:1074.0px;font-size:28px;font-weight:bold;color:#111111;letter-spacing:0.64px">Campaign</span>
<span class="t" style="left:472.5px;top:1074.0px;font-size:28px;font-weight:bold;color:#111111;letter-spacing:2.60px">(4)</span>
<span class="t hy" style="left:519.6px;top:1072.0px;font-size:28px;font-weight:bold;color:#111111;transform:scale(1.71,1.0)">-</span>
<span class="t" style="left:542.3px;top:1074.0px;font-size:28px;font-weight:bold;color:#111111;letter-spacing:-0.45px">Casino</span>
<span class="t" style="left:643.2px;top:1074.0px;font-size:28px;font-weight:bold;color:#111111;letter-spacing:-0.35px">Resorts</span>
<span class="t hy" style="left:753.6px;top:1072.0px;font-size:28px;font-weight:bold;color:#111111;transform:scale(1.68,1.0)">-</span>
<span class="t" style="left:776.8px;top:1074.0px;font-size:28px;font-weight:bold;color:#111111;letter-spacing:0.00px">A</span>
<span class="t r" style="left:1334.9px;top:1074.0px;font-size:28px;font-weight:normal;color:#555555;letter-spacing:0.12px">Casino</span>
<span class="t r" style="left:1430.6px;top:1074.0px;font-size:28px;font-weight:normal;color:#555555;letter-spacing:0.14px">Resorts</span>
<span class="t r hy" style="left:1535.7px;top:1073.0px;font-size:28px;font-weight:normal;color:#555555;transform:scale(1.64,1.0)">-</span>
<span class="t r" style="left:1559.8px;top:1074.0px;font-size:28px;font-weight:normal;color:#555555;letter-spacing:0.00px">A</span>
<span class="t r" style="left:2347.7px;top:1074.0px;font-size:28px;font-weight:normal;color:#555555;letter-spacing:1.04px">Drafts</span>
<span class="t" style="left:260.8px;top:1218.0px;font-size:28px;font-weight:bold;color:#111111;letter-spacing:-0.30px">New</span>
<span class="t" style="left:326.3px;top:1218.0px;font-size:28px;font-weight:bold;color:#111111;letter-spacing:0.64px">Campaign</span>
<span class="t" style="left:472.5px;top:1218.0px;font-size:28px;font-weight:bold;color:#111111;letter-spacing:2.60px">(3)</span>
<span class="t hy" style="left:519.6px;top:1216.0px;font-size:28px;font-weight:bold;color:#111111;transform:scale(1.71,1.0)">-</span>
<span class="t" style="left:542.3px;top:1218.0px;font-size:28px;font-weight:bold;color:#111111;letter-spacing:-0.45px">Casino</span>
<span class="t" style="left:643.2px;top:1218.0px;font-size:28px;font-weight:bold;color:#111111;letter-spacing:-0.35px">Resorts</span>
<span class="t hy" style="left:753.6px;top:1216.0px;font-size:28px;font-weight:bold;color:#111111;transform:scale(1.68,1.0)">-</span>
<span class="t" style="left:776.8px;top:1218.0px;font-size:28px;font-weight:bold;color:#111111;letter-spacing:0.00px">A</span>
<span class="t r" style="left:1334.9px;top:1218.0px;font-size:28px;font-weight:normal;color:#555555;letter-spacing:0.12px">Casino</span>
<span class="t r" style="left:1430.6px;top:1218.0px;font-size:28px;font-weight:normal;color:#555555;letter-spacing:0.14px">Resorts</span>
<span class="t r hy" style="left:1535.7px;top:1217.0px;font-size:28px;font-weight:normal;color:#555555;transform:scale(1.64,1.0)">-</span>
<span class="t r" style="left:1559.8px;top:1218.0px;font-size:28px;font-weight:normal;color:#555555;letter-spacing:0.00px">A</span>
<span class="t r" style="left:2347.7px;top:1218.0px;font-size:28px;font-weight:normal;color:#555555;letter-spacing:1.04px">Drafts</span>
<span class="t" style="left:260.8px;top:1362.0px;font-size:28px;font-weight:bold;color:#111111;letter-spacing:-0.30px">New</span>
<span class="t" style="left:326.3px;top:1362.0px;font-size:28px;font-weight:bold;color:#111111;letter-spacing:0.64px">Campaign</span>
<span class="t" style="left:472.5px;top:1362.0px;font-size:28px;font-weight:bold;color:#111111;letter-spacing:2.10px">(2)</span>
<span class="t hy" style="left:518.2px;top:1360.0px;font-size:28px;font-weight:bold;color:#111111;transform:scale(1.68,1.0)">-</span>
<span class="t" style="left:541.4px;top:1362.0px;font-size:28px;font-weight:bold;color:#111111;letter-spacing:-0.01px">Zestro</span>
<span class="t" style="left:635.5px;top:1362.0px;font-size:28px;font-weight:bold;color:#111111;letter-spacing:0.59px">Cafe</span>
<span class="t hy" style="left:706.7px;top:1360.0px;font-size:28px;font-weight:bold;color:#111111;transform:scale(1.67,1.0)">-</span>
<span class="t" style="left:729.3px;top:1362.0px;font-size:28px;font-weight:bold;color:#111111;letter-spacing:-2.40px">Los</span>
<span class="t" style="left:783.3px;top:1362.0px;font-size:28px;font-weight:bold;color:#111111;letter-spacing:-3.38px">Ang…</span>
<span class="t r" style="left:1335.9px;top:1362.0px;font-size:28px;font-weight:normal;color:#555555;letter-spacing:0.08px">Zestro</span>
<span class="t r" style="left:1423.9px;top:1362.0px;font-size:28px;font-weight:normal;color:#555555;letter-spacing:0.14px">Cafe</span>
<span class="t r hy" style="left:1491.8px;top:1361.0px;font-size:28px;font-weight:normal;color:#555555;transform:scale(1.62,1.0)">-</span>
<span class="t r" style="left:1514.0px;top:1362.0px;font-size:28px;font-weight:normal;color:#555555;letter-spacing:-0.22px">Los</span>
<span class="t r" style="left:1567.9px;top:1362.0px;font-size:28px;font-weight:normal;color:#555555;letter-spacing:-0.18px">Angeles</span>
<span class="t r" style="left:2347.7px;top:1362.0px;font-size:28px;font-weight:normal;color:#555555;letter-spacing:1.04px">Drafts</span>
<span class="t" style="left:2781.8px;top:44.7px;font-size:23px;font-weight:bold;color:#888888;letter-spacing:0.00px">A</span>
</body>
</html>
